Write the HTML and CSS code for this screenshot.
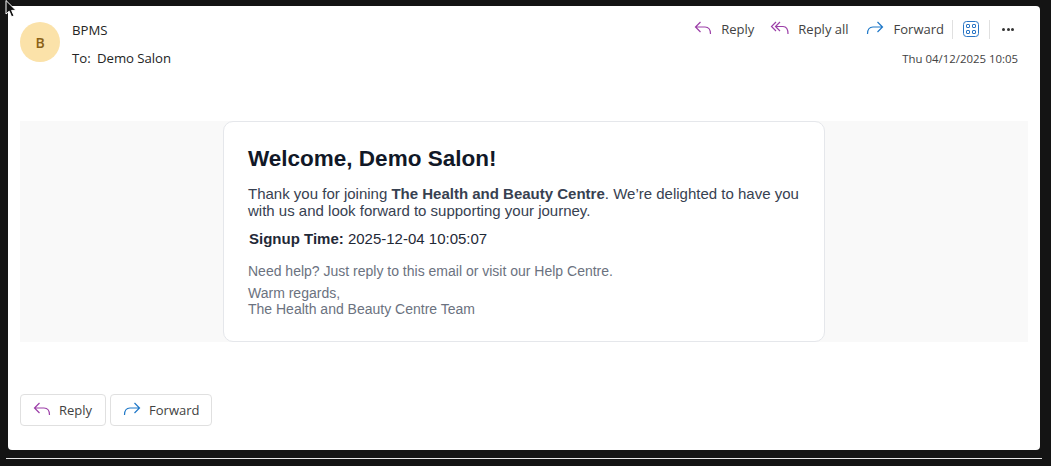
FILE: index.html
```html
<!DOCTYPE html>
<html lang="en">
<head>
    <meta charset="UTF-8">
    <meta name="viewport" content="width=device-width, initial-scale=1.0">
    <title>Welcome, Demo Salon!</title>
    <link rel="stylesheet" href="styles.css">
</head>
<body>
    <svg class="cursor" width="14" height="20" viewBox="0 0 14 20">
        <path d="M1 0.5 V14 L4.2 11.2 L6.6 16.8 L9 15.8 L6.6 10.4 H11 Z" fill="#111" stroke="#fff" stroke-width="1"/>
    </svg>

    <div class="panel">
        <header class="mail-header">
            <div class="avatar">B</div>
            <div class="people">
                <div class="sender">BPMS</div>
                <div class="recipient">To:&nbsp; Demo Salon</div>
            </div>
            <div class="meta">
                <div class="actions">
                    <button class="action">
                        <svg class="icon" viewBox="0 0 20 20"><path class="reply" d="M7.5 3 L2.5 8 L7.5 13 M2.5 8 H12 C15.5 8 17.5 10.5 17.5 15"/></svg>
                        Reply
                    </button>
                    <button class="action">
                        <svg class="icon" viewBox="0 0 20 20"><path class="reply" d="M6 3 L1.5 7.5 L6 12 M10 3 L5.5 7.5 L10 12 M5.5 7.5 H13 C16 7.5 18 10 18 15"/></svg>
                        Reply all
                    </button>
                    <button class="action last">
                        <svg class="icon" viewBox="0 0 20 20"><path class="forward" d="M12.5 3 L17.5 8 L12.5 13 M17.5 8 H8 C4.5 8 2.5 10.5 2.5 15"/></svg>
                        Forward
                    </button>
                    <span class="sep"></span>
                    <svg class="icon apps" viewBox="0 0 16 16">
                        <rect x="0.5" y="0.5" width="15" height="15" rx="3"/>
                        <rect x="3.5" y="3.5" width="3" height="3" rx="0.5"/>
                        <rect x="9.5" y="3.5" width="3" height="3" rx="0.5"/>
                        <rect x="3.5" y="9.5" width="3" height="3" rx="0.5"/>
                        <rect x="9.5" y="9.5" width="3" height="3" rx="0.5"/>
                    </svg>
                    <span class="sep"></span>
                    <span class="more"><i></i><i></i><i></i></span>
                </div>
                <div class="date">Thu 04/12/2025 10:05</div>
            </div>
        </header>

        <div class="mail-body">
            <div class="card">
                <h1>Welcome, Demo Salon!</h1>
                <p class="intro">Thank you for joining <strong>The Health and Beauty Centre</strong>. We’re delighted to have you with us and look forward to supporting your journey.</p>
                <p class="signup"><strong>Signup Time:</strong> 2025-12-04 10:05:07</p>
                <p class="muted help">Need help? Just reply to this email or visit our Help Centre.</p>
                <p class="muted">Warm regards,<br>The Health and Beauty Centre Team</p>
            </div>
        </div>

        <div class="footer-buttons">
            <button class="outline reply-btn">
                <svg class="icon" viewBox="0 0 20 20"><path class="reply" d="M7.5 3 L2.5 8 L7.5 13 M2.5 8 H12 C15.5 8 17.5 10.5 17.5 15"/></svg>
                Reply
            </button>
            <button class="outline">
                <svg class="icon" viewBox="0 0 20 20"><path class="forward" d="M12.5 3 L17.5 8 L12.5 13 M17.5 8 H8 C4.5 8 2.5 10.5 2.5 15"/></svg>
                Forward
            </button>
        </div>
    </div>
    <div class="bottom-line"></div>
</body>
</html>
```

FILE: styles.css
```css
html, body {
    height: 100%;
}

body {
    margin: 0;
    padding: 6px 11px 0 8px;
    box-sizing: border-box;
    height: 466px;
    overflow: hidden;
    position: relative;
    background-color: #141414;
    font-family: "Open Sans", "Noto Sans", sans-serif;
    color: #242424;
}

.cursor {
    position: absolute;
    left: 5px;
    top: 0;
}

.panel {
    height: 444px;
    background: #fff;
    border-radius: 4px;
    padding: 0 12px;
    box-sizing: border-box;
}

.bottom-line {
    height: 1px;
    margin: 8px -2px 0 -2px;
    background: #e6e6e6;
}

.mail-header {
    display: flex;
    height: 115px;
    box-sizing: border-box;
    padding-top: 15px;
}

.avatar {
    width: 40px;
    height: 40px;
    margin-top: 1px;
    border-radius: 50%;
    background: #fbe2a9;
    color: #8a6116;
    display: flex;
    align-items: center;
    justify-content: center;
    font-size: 14px;
    font-weight: 600;
}

.people {
    margin-left: 12px;
    flex: 1;
    font-size: 13.2px;
    line-height: 18px;
}

.recipient {
    margin-top: 10px;
    word-spacing: -0.3px;
}

.meta {
    display: flex;
    flex-direction: column;
    align-items: flex-end;
    margin-right: -2px;
}

.actions {
    display: flex;
    align-items: center;
    height: 18px;
    margin-top: -1px;
}

button {
    font: inherit;
    background: none;
    border: none;
    padding: 0;
    color: #424242;
    display: flex;
    align-items: center;
}

.action {
    font-size: 13px;
    margin-right: 16px;
    gap: 8px;
}

.action.last {
    margin-right: 8px;
    gap: 9px;
}

.icon {
    width: 20px;
    height: 20px;
    flex: none;
}

.icon path {
    fill: none;
    stroke-width: 1.2;
}

.reply {
    stroke: #9c3fa8;
}

.forward {
    stroke: #1f78c8;
}

.sep {
    width: 1px;
    height: 19px;
    background: #e0e0e0;
}

.apps {
    width: 16px;
    height: 16px;
    margin: 0 10px;
}

.apps rect {
    fill: none;
    stroke: #2a76c6;
    stroke-width: 1;
}

.more {
    display: flex;
    gap: 1.5px;
    margin-left: 12px;
    margin-right: 16px;
}

.more i {
    width: 3px;
    height: 3px;
    border-radius: 50%;
    background: #333;
}

.date {
    margin-top: 13px;
    margin-right: 12px;
    font-size: 11.4px;
    line-height: 16px;
    color: #424242;
}

.mail-body {
    background: #f9f9f9;
    height: 221px;
    display: flex;
    justify-content: center;
}

.card {
    width: 602px;
    box-sizing: border-box;
    background: #fff;
    border: 1px solid #e5e7eb;
    border-radius: 10px;
    padding: 24px;
    font-family: "Liberation Sans", Arial, sans-serif;
    font-size: 15px;
    color: #374151;
}

h1 {
    margin: 0 0 13px;
    font-size: 22.5px;
    line-height: 26px;
    color: #111827;
}

.card p {
    margin: 0;
}

.intro {
    line-height: 17px;
}

.signup {
    margin-top: 11px !important;
    padding-left: 1px;
    line-height: 17px;
    color: #1f2937;
}

.muted {
    font-size: 14px;
    line-height: 16px;
    color: #6b7280;
}

.help {
    margin-top: 16px !important;
    margin-bottom: 6px !important;
}

.footer-buttons {
    display: flex;
    gap: 4px;
    margin-top: 52px;
}

.outline {
    height: 32px;
    padding: 0 11px;
    gap: 7px;
    font-size: 13px;
    border: 1px solid #e0e0e0;
    border-radius: 4px;
    background: #fff;
}

.outline.reply-btn {
    padding-right: 13px;
}
```
